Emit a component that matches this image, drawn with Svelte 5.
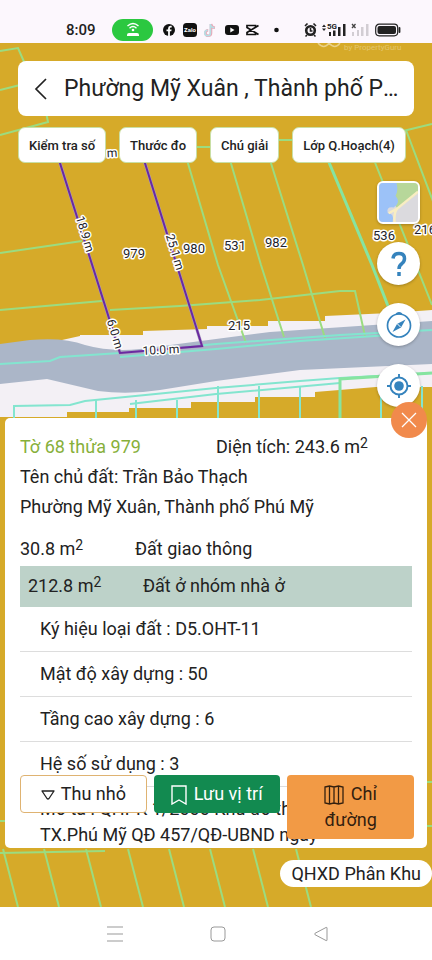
<script lang="ts">
  interface MapLabel {
    text: string;
    x: number;
    y: number;
    angle?: number;
  }

  const filters = ['Kiểm tra số', 'Thước đo', 'Chú giải', 'Lớp Q.Hoạch(4)'];

  const details = [
    'Ký hiệu loại đất : D5.OHT-11',
    'Mật độ xây dựng : 50',
    'Tầng cao xây dựng : 6',
    'Hệ số sử dụng : 3',
  ];

  const parcels: MapLabel[] = [
    { text: '979', x: 134, y: 258 },
    { text: '980', x: 194, y: 253 },
    { text: '531', x: 235, y: 250 },
    { text: '982', x: 276, y: 247 },
    { text: '536', x: 384, y: 240 },
    { text: '216', x: 425, y: 234 },
    { text: '215', x: 239, y: 330 },
  ];

  const lengths: MapLabel[] = [
    { text: '18.9 m', x: 85, y: 234, angle: 73 },
    { text: '25.1 m', x: 175, y: 252, angle: 73 },
    { text: '6.0 m', x: 115, y: 334, angle: 73 },
    { text: '10.0 m', x: 161, y: 350, angle: -3 },
    { text: 'm', x: 112, y: 153, angle: -3 },
  ];

  const lowerEdges = [96, 136, 177, 218, 259, 300, 381, 422];
  const bottomEdges = [3, 44, 86, 128, 169, 210, 253, 296];

  let showPanel = $state(true);
</script>

<div class="screen">
  <header class="status">
    <span class="time">8:09</span>
    <span class="hotspot">
      <svg width="14" height="15" viewBox="0 0 14 15" fill="none" stroke="#fff" stroke-width="1.4">
        <path d="M1.5 4Q7-1 12.5 4M3.5 6.2Q7 3 10.5 6.2" />
        <circle cx="7" cy="8" r="1.3" fill="#fff" stroke="none" />
        <path d="M1 14v-1q0-2 2-2h8q2 0 2 2v1z" fill="#fff" stroke="none" />
      </svg>
    </span>
    <svg class="apps" width="120" height="16" viewBox="0 0 120 16">
      <circle cx="6" cy="8" r="6" fill="#111" />
      <path d="M5.1 14V9.3H3.5V7.4h1.6V6.2Q5.1 3.7 7.4 3.7h1.3v1.8H7.8q-.9 0-.9.9v1h1.7l-.3 1.9H6.9V14z" fill="#fff" />
      <rect x="20" y="1" width="14" height="14" rx="3.5" fill="#111" />
      <text x="27" y="10" class="zalo">Zalo</text>
      <path d="M48 2v9a2.8 2.8 0 1 1-2.8-2.8M48 2q.5 3.5 4 3.8" fill="none" stroke="#e9a8b8" stroke-width="2.6" />
      <path d="M47.4 2v9a2.8 2.8 0 1 1-2.8-2.8M47.4 2q.5 3.5 4 3.8" fill="none" stroke="#b5dfe5" stroke-width="1.6" />
      <rect x="62" y="3" width="14" height="10" rx="3" fill="#111" />
      <path d="M67.3 5.500v5L71.500 8z" fill="#fff" />
      <path d="M95.500 3.500 84 10.500v2h8.500v-2M95.500 12.500 84 5.500v-2h8.500v2" fill="none" stroke="#111" stroke-width="1.7" />
      <circle cx="113.500" cy="8" r="2.300" fill="#111" />
    </svg>
    <svg class="signals" width="98" height="18" viewBox="0 0 98 18">
      <g fill="none" stroke="#222" stroke-width="1.6">
        <circle cx="6.500" cy="9.500" r="4.300" stroke-width="2.600" />
        <path d="M6.500 7v3h2M1 5l2.500-2.500M12 5 9.500 2.500M3 14l-1.500 1.500M10 14l1.500 1.500" />
      </g>
      <path d="m18 6 2-2.500L22 6zM18 7.500h4L20 10z" fill="#222" />
      <text x="23" y="8" class="network">5G</text>
      <g fill="#222">
        <rect x="25" y="11" width="2" height="4" />
        <rect x="29" y="9.500" width="2.500" height="5.500" />
        <rect x="34" y="6" width="2.500" height="9" />
        <rect x="39" y="3" width="2.500" height="12" />
      </g>
      <path d="m48 3 3.500 4M51.500 3 48 7" stroke="#444" stroke-width="1.300" />
      <g fill="#d2cdd3">
        <rect x="48" y="11" width="2" height="4" />
        <rect x="53" y="9" width="2" height="6" />
        <rect x="57" y="6" width="2.500" height="9" />
        <rect x="62" y="3" width="2.500" height="12" />
      </g>
      <rect x="71.700" y="3.200" width="22" height="11.600" rx="3.500" fill="none" stroke="#222" stroke-width="1.200" />
      <rect x="73.500" y="5" width="18.500" height="8" rx="2" fill="#222" />
      <path d="M95.500 7v4" stroke="#222" stroke-width="1.800" stroke-linecap="round" />
    </svg>
  </header>

  <main>
    <svg class="map" viewBox="0 43 432 864" preserveAspectRatio="xMidYMin slice">
      <rect y="43" width="432" height="864" fill="#d6aa29" />

      <!-- road and verge -->
      <path
        d="M0 340H62L80 336V335H143V331L207 329V326H268V321H325V316L390 313L432 310V387H376L315 392V397H255V402H191V408H129V412H67V417H0z"
        fill="#f3f0f5"
      />
      <path d="M0 340H18L30 340V341L18 344H0z" fill="#d6aa29" />
      <path
        d="M0 344 30 340Q64 337 85 345Q110 352 140 349L216 339 270 332 432 321V364L300 370 216 381 160 390Q128 395 98 391L47 379 0 384z"
        fill="#abb6c8"
      />

      <g class="plot">
        <path d="M0 51 18 48 25 64M0 90 20 85M0 135 48 122 46 112M0 253 82 241" />
        <path d="M187 160 218 265 246 343M230 160 261 265 284 337M270 160 303 265 325 338" />
        <path d="M374 160 432 305M406 130 442 225M403 131 432 124M197 147H212M279 140H292" />
        <path d="M0 310 102 301M110 310 180 306 260 300 340 291H355L365 336" />
        <path d="M0 821H8M424 782H432M424 826H432" />
        <path d="M0 853 105 851" />
        {#each bottomEdges as x}
          <path d="M{x} 849l15 58" />
        {/each}
      </g>
      <path class="plot thick" d="M328 160 372 265 388 306" />

      <g class="plot cyan">
        <path d="M0 364 50 361 60 357 120 353 216 344 340 335 432 330M120 357 216 349 300 341 390 335" />
        <path d="M14 418V406L70 405 85 401 216 388 300 381 340 378 432 373M130 404 216 394 340 383" />
        {#each lowerEdges as x}
          <path d="M{x} {x > 200 ? 386 : 400}V418" />
        {/each}
      </g>
      <path class="plot cyan thick" d="M340 418V379L432 373" />

      <path class="selected-glow" d="M59 160 120 353 202 346 144 160" />
      <path class="selected" d="M59 160 120 353 202 346 144 160" />

      {#each parcels as label}
        <text class="parcel" x={label.x} y={label.y}>{label.text}</text>
      {/each}
      {#each lengths as label}
        <text class="length" transform="translate({label.x} {label.y}) rotate({label.angle})" y="4">
          {label.text}
        </text>
      {/each}

      <path d="M318 43q6 7 11 0q6 7 11 0" fill="none" stroke="#ead18a" stroke-width="1.500" />
      <text class="credit" x="344" y="50">by PropertyGuru</text>
    </svg>

    <div class="title-bar">
      <button class="back" aria-label="Quay lại">
        <svg width="14" height="22" viewBox="0 0 14 22" fill="none" stroke="#222" stroke-width="1.700">
          <path d="M12 1 2 11l10 10" />
        </svg>
      </button>
      <h1>Phường Mỹ Xuân , Thành phố Phú Mỹ</h1>
    </div>

    <div class="filters">
      {#each filters as filter}
        <button>{filter}</button>
      {/each}
    </div>

    <div class="controls">
      <button class="layer" aria-label="Bản đồ nền">
        <svg viewBox="0 0 40 40">
          <rect width="40" height="40" fill="#dbdade" />
          <path d="M17 0H40V10L19 27 15 20z" fill="#b7d79a" />
          <path d="M0 0H18Q20 8 17 13Q23 20 15 25Q7 24 9 31Q16 31 14 40H0z" fill="#9cc2f8" />
          <path d="M40 9 19 26Q15 30 16 40M19 26 10 31" fill="none" stroke="#f8edc2" stroke-width="2.500" />
        </svg>
      </button>
      <button aria-label="Trợ giúp">
        <svg width="24" height="30" viewBox="0 0 24 30" fill="none" stroke="#3583bd" stroke-width="3.500">
          <path d="M6 9.500Q6.500 4.500 12 4.500Q17.500 4.500 17.500 9.500Q17.500 12.500 15 14.500Q12 16.500 12 20" />
          <path d="M12 23v4" />
        </svg>
      </button>
      <button aria-label="La bàn">
        <svg width="28" height="28" viewBox="0 0 28 28">
          <circle cx="14" cy="14.500" r="11.500" fill="none" stroke="#3583bd" stroke-width="1.700" />
          <path d="M10.500 3.500Q11 1 14 1T17.500 3.500z" fill="#3583bd" />
          <path d="m20.500 8.500-4.500 8-8.500 4.500 4.500-8z" fill="#3583bd" />
          <path d="m12.500 13 3 3" stroke="#fff" />
        </svg>
      </button>
      <button aria-label="Vị trí của tôi">
        <svg width="26" height="26" viewBox="0 0 26 26" fill="none" stroke="#3583bd" stroke-width="1.900">
          <circle cx="13" cy="13" r="8.500" />
          <circle cx="13" cy="13" r="4.800" fill="#3583bd" stroke="none" />
          <path d="M13 1v4M13 21v4M1 13h4M21 13h4" />
        </svg>
      </button>
    </div>

    {#if showPanel}
      <section class="panel">
        <button class="close" aria-label="Đóng" onclick={() => (showPanel = false)}>
          <svg width="16" height="16" viewBox="0 0 16 16" stroke="#fff" stroke-width="1.300">
            <path d="m1 1 14 14M15 1 1 15" />
          </svg>
        </button>

        <div class="summary">
          <h2>Tờ 68 thửa 979</h2>
          <span>Diện tích: 243.6 m<sup>2</sup></span>
        </div>
        <p>Tên chủ đất: Trần Bảo Thạch</p>
        <p>Phường Mỹ Xuân, Thành phố Phú Mỹ</p>

        <dl class="zones">
          <div class="zone">
            <dt>30.8 m<sup>2</sup></dt>
            <dd>Đất giao thông</dd>
          </div>
          <div class="zone active">
            <dt>212.8 m<sup>2</sup></dt>
            <dd>Đất ở nhóm nhà ở</dd>
          </div>
        </dl>

        <ul class="details">
          {#each details as detail}
            <li>{detail}</li>
          {/each}
          <li>Mô tả : QHPK 1/2000 Khu đô thị<br />TX.Phú Mỹ QĐ 457/QĐ-UBND ngày</li>
        </ul>

        <div class="actions">
          <button class="collapse">
            <svg width="14" height="10" viewBox="0 0 14 10" fill="none" stroke="#222" stroke-width="1.300" stroke-linejoin="round">
              <path d="M1 1h12L8 8.500q-1 1-2 0z" />
            </svg>
            Thu nhỏ
          </button>
          <button class="save">
            <svg width="16" height="20" viewBox="0 0 16 20" fill="none" stroke="#fff" stroke-width="1.400">
              <path d="M1 1h14v18l-7-4-7 4z" />
            </svg>
            Lưu vị trí
          </button>
          <button class="route">
            <svg width="20" height="20" viewBox="0 0 20 20" fill="none" stroke="#33200f" stroke-width="1.300">
              <path d="M1 2 5.500 1 10 2l4.500-1L19 2v16l-4.500 1-4.500-1-4.500 1L1 18zM5.500 1v18M10 2v16M14.500 1v18" />
            </svg>
            Chỉ đường
          </button>
        </div>
      </section>
    {/if}

    <button class="zoning">QHXD Phân Khu</button>
  </main>

  <nav>
    <button aria-label="Gần đây">
      <svg viewBox="0 0 16 16"><path d="M0 1h16M0 8h16M0 15h16" /></svg>
    </button>
    <button aria-label="Trang chủ">
      <svg viewBox="0 0 16 16"><rect x="1" y="1" width="14" height="14" rx="3" /></svg>
    </button>
    <button aria-label="Trở về">
      <svg viewBox="0 0 16 16"><path d="M14 2v12q0 1-1 .5L2 8.700q-1-.700 0-1.400L13 1.500q1-.500 1 .5z" /></svg>
    </button>
  </nav>
</div>

<style>
  :global(body) {
    margin: 0;
  }

  .screen {
    display: flex;
    flex-direction: column;
    min-height: 100vh;
    font-family: Roboto, 'Noto Sans', sans-serif;
    font-size: 18px;
    color: #222;
    background: #fff;
  }

  button {
    padding: 0;
    border: none;
    background: #fff;
    color: inherit;
    font: inherit;
    cursor: pointer;
  }

  h1,
  h2,
  p,
  dl,
  dd,
  ul {
    margin: 0;
    padding: 0;
    font-weight: 400;
  }

  .status {
    display: flex;
    align-items: center;
    box-sizing: border-box;
    height: 43px;
    padding: 16px 30px 0 66px;
    background: #fcf7fd;
  }

  .time {
    width: 46px;
    font-size: 15px;
    font-weight: 500;
  }

  .hotspot {
    display: flex;
    align-items: center;
    justify-content: center;
    width: 41px;
    height: 22px;
    border-radius: 11px;
    background: #2bc840;
  }

  .apps {
    margin-left: 10px;
  }

  .signals {
    margin-left: auto;
  }

  .zalo {
    fill: #fff;
    font-size: 6px;
    font-weight: 700;
    text-anchor: middle;
  }

  .network {
    fill: #222;
    font-size: 8px;
    font-weight: 700;
  }

  main {
    position: relative;
    display: flex;
    flex: 1;
    flex-direction: column;
    padding: 18px 0 19px;
    overflow: hidden;
    background: #d6aa29;
  }

  .map {
    position: absolute;
    inset: 0;
    width: 100%;
    height: 100%;
  }

  .plot {
    fill: none;
    stroke: #9bdc80;
    stroke-width: 2;
  }

  .plot.cyan {
    stroke: #83e5cf;
  }

  .plot.thick {
    stroke-width: 3;
    stroke: #86e4a0;
  }

  .selected,
  .selected-glow {
    fill: none;
    stroke: #6a2aa0;
    stroke-width: 2;
  }

  .selected-glow {
    stroke: #a99bc0;
    stroke-width: 3;
  }

  .parcel,
  .length {
    fill: #1e1e2a;
    font-size: 13px;
    text-anchor: middle;
    paint-order: stroke;
    stroke: #fff;
    stroke-width: 3px;
    stroke-linejoin: round;
  }

  .length {
    font-size: 12px;
  }

  .credit {
    fill: #e3c56c;
    font-size: 8px;
  }

  .title-bar {
    position: relative;
    display: flex;
    align-items: center;
    height: 55px;
    margin: 0 18px;
    padding: 0 8px 0 16px;
    border-radius: 8px;
    background: #fff;
  }

  .back {
    display: flex;
    width: 30px;
  }

  h1 {
    flex: 1;
    overflow: hidden;
    font-size: 23px;
    line-height: 36px;
    text-overflow: ellipsis;
    white-space: nowrap;
  }

  .filters {
    position: relative;
    display: flex;
    gap: 13px;
    margin: 11px 0 0 18px;
  }

  .filters button {
    height: 36px;
    padding: 0 10px;
    border: 1px solid #c9dfa5;
    border-radius: 7px;
    font-size: 13px;
    font-weight: 500;
    white-space: nowrap;
  }

  .controls {
    position: relative;
    display: flex;
    flex-direction: column;
    align-items: flex-end;
    gap: 18px;
    margin: 18px 12px 11px;
  }

  .controls button {
    display: flex;
    align-items: center;
    justify-content: center;
    width: 43px;
    height: 43px;
    border-radius: 50%;
    box-shadow: 0 1px 3px rgba(0, 0, 0, 0.25);
  }

  .controls .layer {
    box-sizing: border-box;
    border: 2px solid #fff;
    border-radius: 6px;
    overflow: hidden;
  }

  .panel {
    position: relative;
    margin: 0 5px;
    padding: 14px 15px 0;
    border-radius: 5px;
    background: #fff;
    line-height: 30px;
  }

  .close {
    position: absolute;
    top: -16px;
    right: 0;
    display: flex;
    align-items: center;
    justify-content: center;
    width: 36px;
    height: 36px;
    border-radius: 50%;
    background: #f18a4c;
  }

  .summary {
    display: grid;
    grid-template-columns: 1fr 1fr;
  }

  h2 {
    color: #87b03a;
    font-size: 18px;
  }

  sup {
    font-size: 14px;
    line-height: 0;
    vertical-align: 5px;
  }

  .zones {
    margin-top: 12px;
  }

  .zone {
    display: flex;
    padding-bottom: 2px;
  }

  .zone dt {
    width: 115px;
  }

  .zone.active {
    padding: 5px 8px 6px;
    background: #bdd2c9;
  }

  .details {
    list-style: none;
    line-height: 26px;
  }

  .details li {
    padding: 9px 0 9px 20px;
    border-bottom: 1px solid #ddd;
  }

  .details li:last-child {
    padding-bottom: 0;
    border-bottom: none;
  }

  .actions {
    position: absolute;
    right: 13px;
    bottom: 9px;
    left: 15px;
    display: grid;
    grid-template-columns: repeat(3, 1fr);
    gap: 7px;
    align-items: start;
    line-height: 26px;
  }

  .actions button {
    padding: 5px 12px;
    border: 1px solid transparent;
    border-radius: 4px;
  }

  .actions svg {
    margin-right: 2px;
    vertical-align: middle;
  }

  .actions .collapse {
    border-color: #dfb372;
  }

  .actions .save {
    background: #128a50;
    color: #fff;
  }

  .actions .route {
    padding: 5px 36px;
    background: #f29a45;
    color: #33200f;
  }

  .zoning {
    position: relative;
    align-self: flex-end;
    height: 27px;
    margin-top: 12px;
    padding: 0 11px;
    border-radius: 14px;
  }

  nav {
    display: flex;
    justify-content: center;
    gap: 87px;
    height: 53px;
    padding-left: 4px;
    background: #fff;
  }

  nav button {
    width: 16px;
  }

  nav svg {
    display: block;
    width: 16px;
    height: 16px;
    fill: none;
    stroke: #999;
  }
</style>
